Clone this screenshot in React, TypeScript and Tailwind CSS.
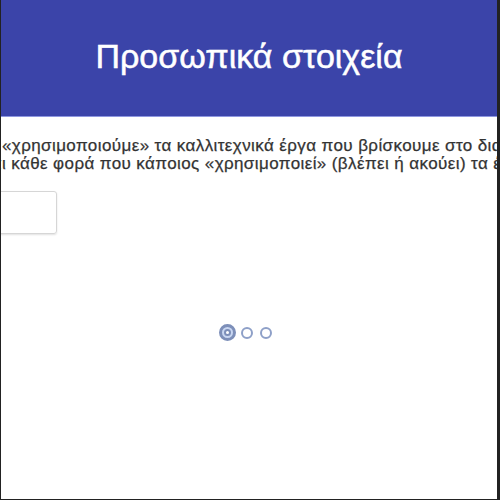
export default function App() {
  return (
    <div
      className="h-[500px] w-[500px] overflow-hidden border-b border-l border-r-[3px] border-[#222] bg-white"
      style={{ fontFamily: "'Liberation Sans', Arial, sans-serif" }}
    >
      <header className="flex h-[117px] items-center justify-center border-b border-[#8e97e0] bg-[#3b44a9]">
        <h1 className="pb-[4px] text-[34px] text-white [-webkit-text-stroke:0.5px_white]">
          Προσωπικά στοιχεία
        </h1>
      </header>

      <div className="mt-[20px] whitespace-nowrap text-[17px] leading-[18px] tracking-[0.4px] text-[#333] [-webkit-text-stroke:0.25px_#333]">
        <p className="ml-[1px]">
          «χρησιμοποιούμε» τα καλλιτεχνικά έργα που βρίσκουμε στο διαδίκτυο
        </p>
        <p className="ml-[-18px]">
          και κάθε φορά που κάποιος «χρησιμοποιεί» (βλέπει ή ακούει) τα έργα
        </p>
      </div>

      <div className="mt-[18px] ml-[-20px] h-[43px] w-[76px] rounded-[3px] border border-[#d6d6d6] shadow-[0_1px_2px_rgba(0,0,0,0.12)]" />

      <div className="mt-[90px] flex items-center justify-center pr-[7px]">
        <span className="mr-[5px] flex size-[17px] items-center justify-center rounded-full border-[3px] border-[#7d8fb9] bg-[#c9d7f2]">
          <span className="size-[7px] rounded-full border-2 border-[#7d8fb9] bg-white" />
        </span>
        <span className="mr-[7px] size-[12px] rounded-full border-[2px] border-[#8ea0c8] bg-white" />
        <span className="size-[12px] rounded-full border-[2px] border-[#8ea0c8] bg-white" />
      </div>
    </div>
  );
}
